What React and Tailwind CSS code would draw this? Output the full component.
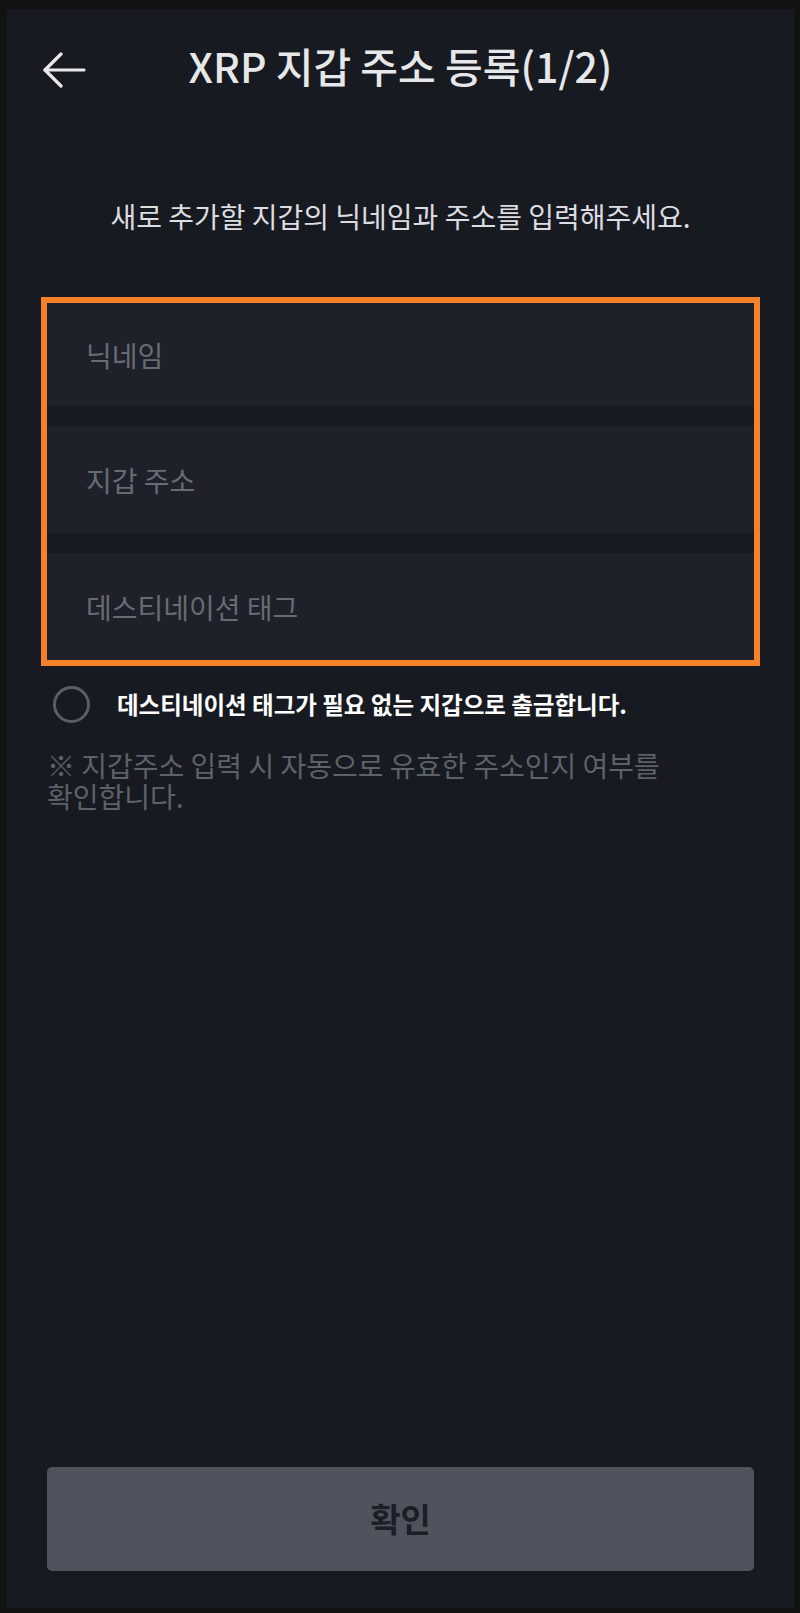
const fields = [
  { label: "닉네임", height: "h-[103px]" },
  { label: "지갑 주소", height: "h-[107px]" },
  { label: "데스티네이션 태그", height: "h-[107px]" },
];

function BackArrow() {
  return (
    <svg
      width="44"
      height="36"
      viewBox="0 0 44 36"
      fill="none"
      stroke="currentColor"
      strokeWidth="3.2"
      strokeLinecap="round"
      strokeLinejoin="round"
    >
      <path d="M3 18H42" />
      <path d="M19 2L3 18L19 34" />
    </svg>
  );
}

export default function App() {
  return (
    <div
      className="h-[1613px] w-[800px] bg-[#121212] pt-[9px] pr-[6px] pb-[5px] pl-[7px]"
      style={{ fontFamily: '"Noto Sans CJK KR", "Noto Sans", sans-serif' }}
    >
      <main className="flex h-full flex-col bg-[#171a21] px-[40px] pb-[37px] text-white">
        <header className="grid h-[122px] grid-cols-[1fr_auto_1fr] items-center">
          <button type="button" className="-ml-[5px] text-[#e8e9eb]">
            <BackArrow />
          </button>

          <h1 className="mb-[8px] text-[41px] font-medium text-[#e6e7e9]">
            XRP 지갑 주소 등록(1/2)
          </h1>

          <div />
        </header>

        <p className="mt-[68px] text-center text-[28px] leading-[34px] text-[#dcdde0]">
          새로 추가할 지갑의 닉네임과 주소를 입력해주세요.
        </p>

        <section className="-mx-[6px] mt-[64px] flex flex-col gap-[20px] border-[6px] border-[#f5822b]">
          {fields.map((field) => (
            <div
              key={field.label}
              className={`flex items-center bg-[#1e212a] pl-[39px] ${field.height}`}
            >
              <span className="text-[28px] text-[#676b73]">
                {field.label}
              </span>
            </div>
          ))}
        </section>

        <label className="mt-[20px] flex items-center gap-[27px] pl-[6px]">
          <span className="h-[37px] w-[37px] shrink-0 rounded-full border-[3px] border-[#5a5d64]" />
          <span className="text-[23.5px] font-bold text-white">
            데스티네이션 태그가 필요 없는 지갑으로 출금합니다.
          </span>
        </label>

        <p className="mt-[27px] break-keep text-[28px] leading-[31px] text-[#5d6169]">
          ※ 지갑주소 입력 시 자동으로 유효한 주소인지 여부를 확인합니다.
        </p>

        <button
          type="button"
          className="mt-auto flex h-[104px] w-full items-center justify-center rounded-[5px] bg-[#4f535d] text-[33px] font-bold text-[#1b1e25]"
        >
          확인
        </button>
      </main>
    </div>
  );
}
